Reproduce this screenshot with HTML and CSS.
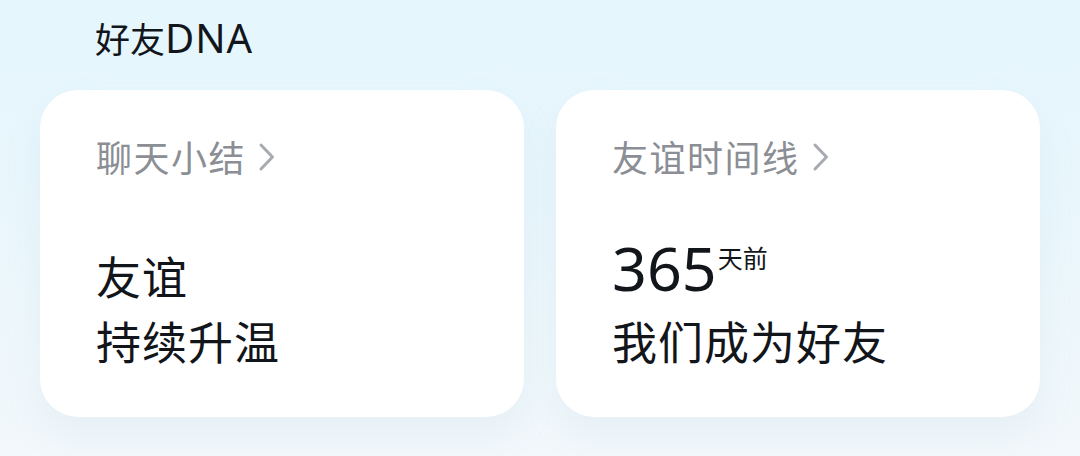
FILE: index.html
```html
<!DOCTYPE html>
<html lang="zh-CN">
<head>
<meta charset="utf-8">
<title>好友DNA</title>
<link rel="stylesheet" href="styles.css">
</head>
<body>
<div class="page">
  <h1 class="title">好友<span class="latin">DNA</span></h1>
  <div class="cards">
    <section class="card">
      <div class="card-head">
        <span class="card-label">聊天小结</span>
        <svg class="chev" width="18" height="30" viewBox="0 0 18 30" aria-hidden="true"><path d="M3 3 L14.5 15 L3 27" fill="none" stroke="#a7aaaf" stroke-width="3" stroke-linecap="round" stroke-linejoin="round"/></svg>
      </div>
      <div class="card-body">
        <div class="line">友谊</div>
        <div class="line">持续升温</div>
      </div>
    </section>
    <section class="card">
      <div class="card-head">
        <span class="card-label">友谊时间线</span>
        <svg class="chev" width="18" height="30" viewBox="0 0 18 30" aria-hidden="true"><path d="M3 3 L14.5 15 L3 27" fill="none" stroke="#a7aaaf" stroke-width="3" stroke-linecap="round" stroke-linejoin="round"/></svg>
      </div>
      <div class="card-body">
        <div class="num-row"><span class="num">365</span><span class="unit">天前</span></div>
        <div class="line">我们成为好友</div>
      </div>
    </section>
  </div>
</div>
</body>
</html>
```
FILE: styles.css
```css
html, body {
  margin: 0;
  padding: 0;
}
body {
  width: 1080px;
  height: 456px;
  overflow: hidden;
  background: linear-gradient(180deg, #e5f6fd 0%, #e9f6fc 45%, #f2f8fb 100%);
  font-family: "Noto Sans", "Noto Sans CJK SC", sans-serif;
  color: #12151a;
}
.page {
  padding: 0 40px;
}
.title {
  margin: 0;
  padding-left: 55px;
  font-family: "Noto Sans CJK SC", sans-serif;
  font-size: 35px;
  font-weight: 400;
  line-height: 76px;
  color: #12151a;
}
.latin {
  font-family: "Noto Sans", sans-serif;
  font-size: 40px;
  letter-spacing: 1px;
}
.cards {
  margin-top: 14px;
  display: grid;
  grid-template-columns: 484px 484px;
  gap: 32px;
}
.card {
  height: 327px;
  box-sizing: border-box;
  padding: 42px 56px 44px;
  background: #ffffff;
  border-radius: 38px;
  box-shadow: 0 18px 34px rgba(165, 190, 205, 0.13);
  display: flex;
  flex-direction: column;
}
.card-head {
  display: flex;
  align-items: center;
  height: 48px;
  gap: 12px;
}
.card-label {
  font-size: 36px;
  letter-spacing: 1.5px;
  line-height: 48px;
  color: #8b8e94;
  font-family: "Noto Sans CJK SC", sans-serif;
}
.chev {
  display: block;
  margin-top: 2px;
}
.card-body {
  margin-top: 63px;
  display: flex;
  flex-direction: column;
}
.line {
  font-size: 45px;
  letter-spacing: 1px;
  line-height: 65px;
  font-family: "Noto Sans CJK SC", sans-serif;
  color: #12151a;
}
.num-row {
  display: flex;
  align-items: flex-start;
  height: 49px;
  margin-bottom: 16px;
}
.num {
  font-family: "Noto Sans", sans-serif;
  font-size: 61px;
  line-height: 49px;
  color: #12151a;
}
.unit {
  font-family: "Noto Sans CJK SC", sans-serif;
  font-size: 25px;
  line-height: 24px;
  margin-top: 2px;
  margin-left: 1px;
  color: #12151a;
}
```
